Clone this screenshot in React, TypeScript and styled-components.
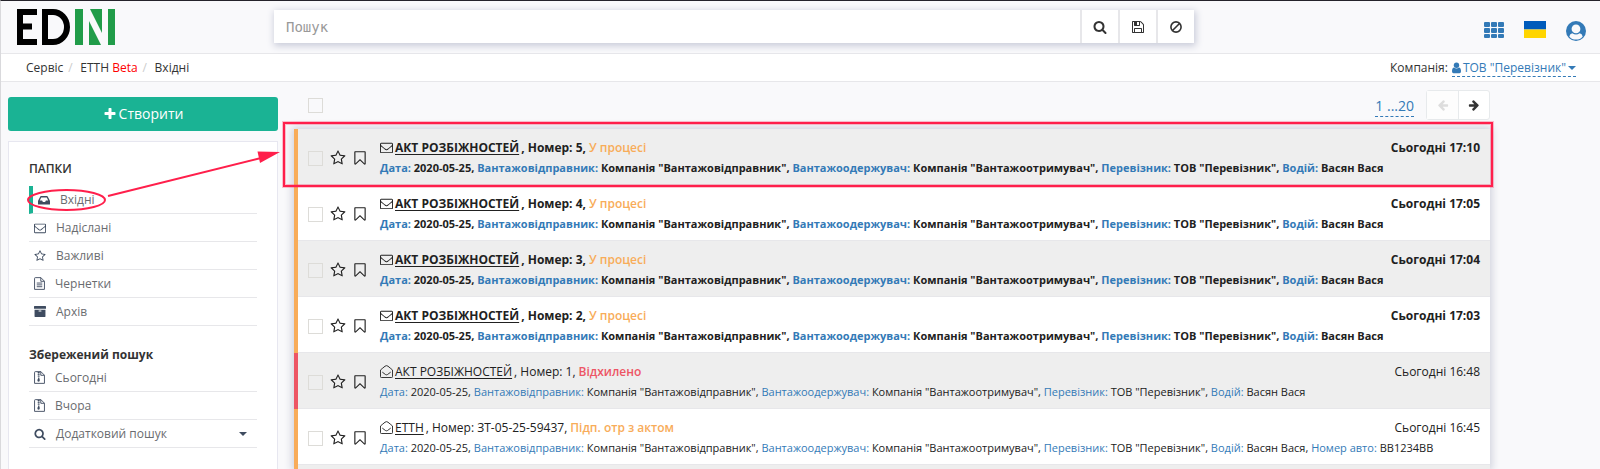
import React from "react";
import styled, { createGlobalStyle } from "styled-components";

const GlobalStyle = createGlobalStyle`
  * { box-sizing: border-box; }
  html, body { margin: 0; }
  body {
    background: #f9f9fb;
    color: #333;
    font: 12px/18px "Open Sans", "Noto Sans", sans-serif;
  }
  button, input { font: inherit; color: inherit; margin: 0; }
  a { color: inherit; text-decoration: none; }
  svg { display: block; flex: none; }
`;

/* ---------- icons ---------- */

const paths = {
  search:
    "M1216 832q0-185-131.5-316.5t-316.5-131.5-316.5 131.5-131.5 316.5 131.5 316.5 316.5 131.5 316.5-131.5 131.5-316.5zm512 832q0 52-38 90t-90 38q-54 0-90-38l-343-342q-179 124-399 124-143 0-273.5-55.5t-225-150-150-225-55.5-273.5 55.5-273.5 150-225 225-150 273.5-55.5 273.5 55.5 225 150 150 225 55.5 273.5q0 220-124 399l343 343q37 37 37 90z",
  star: "M1201 1004l306-297-422-62-189-382-189 382-422 62 306 297-73 421 378-199 377 199zm527-357q0 22-26 48l-363 354 86 500q1 7 1 20 0 50-41 50-19 0-40-12l-449-236-449 236q-22 12-40 12-21 0-31.5-14.5t-10.5-35.5q0-6 2-20l86-500-364-354q-25-27-25-48 0-37 56-46l502-73 225-455q19-41 49-41t49 41l225 455 502 73q56 9 56 46z",
  envelope:
    "M1664 1504v-768q-32 36-69 66-268 206-426 338-51 43-83 67t-86.5 48.5-102.5 24.5h-2q-48 0-102.5-24.5t-86.5-48.5-83-67q-158-132-426-338-37-30-69-66v768q0 13 9.5 22.5t22.5 9.5h1472q13 0 22.5-9.5t9.5-22.5zm0-1051v-24.5l-.5-13-3-12.5-5.5-9-9-7.5-14-2.5h-1472q-13 0-22.5 9.5t-9.5 22.5q0 168 147 284 193 152 401 317 6 5 35 29.5t46 37.5 44.5 31.5 50.5 27.5 43 9h2q20 0 43-9t50.5-27.5 44.5-31.5 46-37.5 35-29.5q208-165 401-317 54-43 100.5-115.5t46.5-131.5zm128-37v1088q0 66-47 113t-113 47h-1472q-66 0-113-47t-47-113v-1088q0-66 47-113t113-47h1472q66 0 113 47t47 113z",
  bookmark:
    "M1408 256h-1024v1242l423-406 89-85 89 85 423 406v-1242zm12-128q23 0 44 9 33 13 52.5 41t19.5 62v1289q0 34-19.5 62t-52.5 41q-19 8-44 8-48 0-83-32l-441-424-441 424q-36 33-83 33-23 0-44-9-33-13-52.5-41t-19.5-62v-1289q0-34 19.5-62t52.5-41q21-9 44-9h1048z",
  arrow:
    "M1600 960q0 54-37 91l-651 651q-39 37-91 37-51 0-90-37l-75-75q-38-38-38-91t38-91l293-293h-704q-52 0-84.5-37.5t-32.5-90.5v-128q0-53 32.5-90.5t84.5-37.5h704l-293-294q-38-36-38-90t38-90l75-75q38-38 90-38 53 0 91 38l651 651q37 35 37 90z",
  plus: "M1600 736v192q0 40-28 68t-68 28h-416v416q0 40-28 68t-68 28h-192q-40 0-68-28t-28-68v-416h-416q-40 0-68-28t-28-68v-192q0-40 28-68t68-28h416v-416q0-40 28-68t68-28h192q40 0 68 28t28 68v416h416q40 0 68 28t28 68z",
  floppy:
    "M512 1536h768v-384h-768v384zm896 0h128v-896q0-14-10-38.5t-20-34.5l-281-281q-10-10-34-20t-39-10v416q0 40-28 68t-68 28h-576q-40 0-68-28t-28-68v-416h-128v1280h128v-416q0-40 28-68t68-28h832q40 0 68 28t28 68v416zm-384-928v-320q0-13-9.5-22.5t-22.5-9.5h-192q-13 0-22.5 9.5t-9.5 22.5v320q0 13 9.5 22.5t22.5 9.5h192q13 0 22.5-9.5t9.5-22.5zm640 32v928q0 40-28 68t-68 28h-1344q-40 0-68-28t-28-68v-1344q0-40 28-68t68-28h928q40 0 88 20t76 48l280 280q28 28 48 76t20 88z",
};

type GlyphProps = { name: keyof typeof paths; size?: number; flip?: boolean };

const Glyph = ({ name, size = 14, flip }: GlyphProps) => (
  <svg width={size} height={size} viewBox="0 0 1792 1792" fill="currentColor" aria-hidden="true">
    <path d={paths[name]} transform={flip ? "translate(1792 0) scale(-1 1)" : undefined} />
  </svg>
);

const EnvelopeOpen = () => (
  <svg width="13" height="13" viewBox="0 0 14 14" fill="none" stroke="currentColor" aria-hidden="true">
    <path d="M.5 5.4V12.5q0 1 1 1h11q1 0 1-1V5.4Q11 3.300 8.600 1.300Q7 .1 5.400 1.300Q3 3.300 .5 5.400z" />
    <path d="M2.500 7.700Q4.500 9.200 6 10.300Q7 10.900 8 10.300Q9.500 9.200 11.500 7.700" />
  </svg>
);

const Inbox = () => (
  <svg width="12" height="14" viewBox="0 0 12 14" fill="currentColor" aria-hidden="true">
    <path
      fillRule="evenodd"
      d="M2.300 3.500Q2.500 3 3 3h6q.5 0 .7.5L11.800 7.500q.2.400.2.900V11q0 .5-.5.500h-11q-.5 0-.5-.5V8.400q0-.5.2-.9zM3.200 4.400L1.800 7.500h2.300l.8 1.500h2.200l.8-1.500h2.300L8.800 4.400z"
    />
  </svg>
);

const FileShape = () => (
  <path d="M1.500.6h6L11.400 4.500V13.400H.6V1.500Q.6.6 1.500.6zM7.400.6V4.600H11.400" fill="none" stroke="currentColor" />
);

const FileText = () => (
  <svg width="11" height="13" viewBox="0 0 12 14" aria-hidden="true">
    <FileShape />
    <path d="M3 6.500h6M3 8.500h6M3 10.500h6" stroke="currentColor" />
  </svg>
);

const FileZip = () => (
  <svg width="11" height="13" viewBox="0 0 12 14" aria-hidden="true">
    <FileShape />
    <path d="M4 1v1h1v1H4v1h1v1H4v1h1v1l-1.300 2.600Q3.500 11.500 5 11.500T6.300 9.600L5.600 7V6h.6V5h-.6V4h.6V3h-.6V2h.6V1z" fill="currentColor" />
  </svg>
);

const Archive = () => (
  <svg width="12" height="13" viewBox="0 0 13 14" fill="currentColor" aria-hidden="true">
    <path fillRule="evenodd" d="M.5 1h12q.5 0 .5.500V4H0V1.500Q0 1 .5 1zM.6 5h11.800V12.500q0 .5-.5.500H1.100q-.5 0-.5-.5zM5.300 6q-.5 0-.5.500T5.300 7h2.400q.5 0 .5-.5T7.700 6z" />
  </svg>
);

const Ban = () => (
  <svg width="12" height="12" viewBox="0 0 12 12" fill="none" stroke="currentColor" strokeWidth="1.600" aria-hidden="true">
    <circle cx="6" cy="6" r="5.100" />
    <path d="M2.500 9.500L9.500 2.500" />
  </svg>
);

const AppGrid = () => (
  <svg width="20" height="17" viewBox="0 0 20 17" fill="currentColor" aria-hidden="true">
    {[1, 7, 13].map((y) => [0, 7, 14].map((x) => <rect key={`${x}-${y}`} x={x} y={y} width="6" height={y === 13 ? 4 : 5} rx="1" />))}
  </svg>
);

const Flag = () => (
  <svg width="22" height="17" viewBox="0 0 22 17" role="img" aria-label="Українська">
    <path fill="#005bbb" d="M0 0h22v8.500H0z" />
    <path fill="#ffd500" d="M0 8.500h22V17H0z" />
  </svg>
);

const UserCircle = () => (
  <svg width="20" height="20" viewBox="0 0 20 20" aria-hidden="true">
    <circle cx="10" cy="10" r="10" fill="currentColor" />
    <circle cx="10" cy="7.900" r="4.400" fill="#f9f9fb" />
    <path d="M3.300 15.400Q3.900 12.400 6.300 12.200Q10 15 13.700 12.200Q16.100 12.400 16.700 15.400A8.600 8.600 0 0 1 3.300 15.400z" fill="#f9f9fb" />
  </svg>
);

const UserIcon = () => (
  <svg width="9" height="12" viewBox="0 0 9 12" fill="currentColor" aria-hidden="true">
    <circle cx="4.500" cy="3.200" r="2.700" />
    <path d="M2.200 5.400Q4.500 7.400 6.800 5.400Q9 5.600 9 9.300Q9 11.200 7.500 11.200H1.500Q0 11.200 0 9.300Q0 5.600 2.200 5.400z" />
  </svg>
);

const Caret = () => (
  <svg width="8" height="4" viewBox="0 0 8 4" fill="currentColor" aria-hidden="true">
    <path d="M0 0h8L4 4z" />
  </svg>
);

const Logo = () => (
  <svg width="98" height="36" viewBox="0 0 98 36" role="img" aria-label="EDIN">
    <path d="M0 0h20v6H6v8.500h9v6H6V30h14v6H0z" />
    <path fillRule="evenodd" d="M25 0H36a17 18 0 0 1 0 36H25zM31 6V30h5a11 12 0 0 0 0-24z" />
    <path fill="#219c49" d="M58 0h8v36h-8zM91 0h7v36h-7zM72 12L84 36H72zM73 0H85V24z" />
  </svg>
);

/* ---------- page frame ---------- */

const Page = styled.div`
  display: flex;
  flex-direction: column;
  min-height: 100vh;
  border-top: 1px solid #25232b;
  border-left: 1px solid #d9d9dc;
`;

const Header = styled.header`
  display: flex;
  align-items: flex-start;
  height: 53px;
  padding: 8px 14px 0 16px;
  border-bottom: 1px solid #e7e7ea;
`;

const LogoLink = styled.a`
  width: 257px;
`;

const SearchBar = styled.form`
  display: flex;
  flex: 1;
  height: 33px;
  margin-top: 1px;
  background: #fff;
  box-shadow: 1px 2px 7px 1px #c9cbd9;
`;

const SearchInput = styled.input`
  flex: 1;
  min-width: 0;
  padding: 0 12px;
  border: 0;
  background: transparent;
  font: 14px "DejaVu Sans Mono", monospace;
  &::placeholder { color: #999; opacity: 1; }
`;

const SearchButton = styled.button`
  display: grid;
  place-items: center;
  width: 38px;
  padding: 0;
  border: 0;
  border-left: 2px solid #e7e7ea;
  background: #fff;
`;

const Tools = styled.nav`
  display: flex;
  justify-content: flex-end;
  gap: 20px;
  width: 392px;
  padding-top: 12px;
  color: #337ab7;
`;

const Crumbs = styled.nav`
  display: flex;
  justify-content: space-between;
  height: 28px;
  padding: 5px 24px 0 25px;
  background: #fff;
  border-bottom: 1px solid #e7e7ea;
`;

const CrumbList = styled.div`
  display: flex;
`;

const Slash = styled.span`
  width: 17px;
  padding-left: 5px;
  color: #ccc;
`;

const Beta = styled.span`
  color: #f00;
`;

const Company = styled.div`
  display: flex;
  gap: 4px;
`;

const DashedLink = styled.a<{ $large?: boolean }>`
  display: flex;
  align-items: center;
  gap: 2px;
  height: ${(p) => (p.$large ? 22 : 18)}px;
  color: #337ab7;
  font-size: ${(p) => (p.$large ? 14 : 12)}px;
  border-bottom: 1px dashed #337ab7;
`;

const Columns = styled.div`
  display: flex;
  flex: 1;
  gap: 16px;
  padding: 0 110px 0 7px;
`;

/* ---------- sidebar ---------- */

const Sidebar = styled.aside`
  display: flex;
  flex: none;
  flex-direction: column;
  width: 270px;
  padding-top: 15px;
`;

const CreateButton = styled.button`
  display: flex;
  align-items: center;
  justify-content: center;
  gap: 2px;
  width: 100%;
  height: 34px;
  margin-bottom: 10px;
  border: 0;
  border-radius: 3px;
  background: #1ab394;
  color: #fff;
  font-size: 14px;
`;

const Panel = styled.section`
  flex: 1;
  padding: 18px 20px 0;
  background: #fff;
  border: 1px solid #e7e7f0;
  border-bottom: 0;
`;

const PanelTitle = styled.h2<{ $bold?: boolean }>`
  margin: 0;
  padding-bottom: ${(p) => (p.$bold ? 1 : 9)}px;
  font-size: 12px;
  line-height: 17px;
  font-weight: ${(p) => (p.$bold ? 700 : 600)};
`;

const FolderList = styled.ul`
  margin: 0;
  padding: 0 0 20px;
  list-style: none;
  &:last-child { padding-bottom: 0; }
`;

const Folder = styled.li<{ $active?: boolean }>`
  position: relative;
  height: 28px;
  padding-left: 5px;
  border-bottom: 1px solid #e7e7ea;
  border-left: ${(p) => (p.$active ? "4px solid #1ab394" : "0")};
`;

const FolderLink = styled.a`
  display: flex;
  align-items: center;
  gap: 10px;
  height: 27px;
  padding-right: 10px;
  color: #6a6c6f;
  svg { color: #3f4c60; }
  svg:last-child:not(:first-child) { margin-left: auto; }
`;

const Pointer = styled.svg`
  position: absolute;
  top: -50px;
  left: -8px;
  z-index: 3;
  pointer-events: none;
`;

/* ---------- document list ---------- */

const Main = styled.main`
  display: flex;
  flex: 1;
  flex-direction: column;
  min-width: 0;
`;

const ListBar = styled.div`
  display: flex;
  align-items: flex-start;
  justify-content: space-between;
  height: 47px;
  padding: 8px 0 0 14px;
`;

const Check = styled.input`
  appearance: none;
  flex: none;
  width: 15px;
  height: 15px;
  border: 1px solid #dddcd8;
  background: transparent;
`;

const BarCheck = styled(Check)`
  margin-top: 8px;
`;

const Pager = styled.div`
  display: flex;
  align-items: flex-start;
  gap: 12px;
`;

const PagerLink = styled(DashedLink)`
  margin-top: 5px;
`;

const PagerButtons = styled.div`
  display: flex;
  border: 1px solid #e7eaec;
  border-radius: 3px;
  background: #fff;
`;

const PagerButton = styled.button`
  display: grid;
  place-items: center;
  width: 31px;
  height: 28px;
  padding: 0;
  border: 0;
  background: none;
  & + & { border-left: 1px solid #e7eaec; }
  &:disabled { color: #ddd; background: #fdfdfd; }
`;

const List = styled.div`
  display: flex;
  flex: 1;
  flex-direction: column;
  background: #eee;
  box-shadow: 0 0 8px 2px #cfd1dc;
`;

const Row = styled.article<{ $tone: string; $unread: boolean }>`
  position: relative;
  display: flex;
  height: 56px;
  padding: 8px 10px 0;
  border-left: 4px solid ${(p) => p.$tone};
  background: #fff;
  box-shadow: inset 0 -1px #e7e7ea;
  color: #212121;
  font-weight: ${(p) => (p.$unread ? 700 : 400)};
  &:nth-child(odd) { background: #eee; }
`;

const NextRow = styled.div`
  flex: 1;
  border-left: 4px solid #f8ac59;
`;

const Marks = styled.div`
  display: flex;
  align-items: center;
  gap: 7px;
  width: 72px;
  height: 43px;
`;

const MarkButton = styled.button`
  margin-top: -1px;
  margin-right: -1px;
  padding: 0;
  border: 0;
  background: none;
`;

const Body = styled.div`
  flex: 1;
  min-width: 0;
`;

const TitleLine = styled.div`
  display: flex;
  align-items: center;
  height: 21px;
`;

const DocLink = styled.a`
  margin: 0 2px;
  text-decoration: underline;
  text-underline-offset: 2px;
`;

const Status = styled.span<{ $tone: string }>`
  margin-left: 3px;
  color: ${(p) => p.$tone};
  font-weight: 600;
`;

const Details = styled.p`
  margin: 0;
  font-size: 11px;
  line-height: 20px;
  white-space: nowrap;
`;

const Label = styled.span`
  color: #337ab7;
`;

const Time = styled.time`
  line-height: 21px;
`;

const Highlight = styled.div`
  position: absolute;
  inset: -7px -3px -2px -15px;
  z-index: 2;
  border: 2px solid #ff1f4b;
  box-shadow: 0 0 0 1px #ff1f4b44, inset 0 0 0 1px #ff1f4b44;
  pointer-events: none;
`;

/* ---------- data ---------- */

const ORANGE = "#f8ac59";
const RED = "#ed5565";

type Doc = { kind: string; number: string; status: string; tone: string; time: string; unread: boolean; car?: string };

const inWork = (n: number, time: string): Doc => ({
  kind: "АКТ РОЗБІЖНОСТЕЙ",
  number: String(n),
  status: "У процесі",
  tone: ORANGE,
  time,
  unread: true,
});

const docs: Doc[] = [
  inWork(5, "17:10"),
  inWork(4, "17:05"),
  inWork(3, "17:04"),
  inWork(2, "17:03"),
  { kind: "АКТ РОЗБІЖНОСТЕЙ", number: "1", status: "Відхилено", tone: RED, time: "16:48", unread: false },
  { kind: "ЕТТН", number: "ЗТ-05-25-59437", status: "Підп. отр з актом", tone: ORANGE, time: "16:45", unread: false, car: "ВВ1234ВВ" },
];

const DocRow = ({ doc, marked }: { doc: Doc; marked: boolean }) => (
  <Row $tone={doc.tone} $unread={doc.unread}>
    <Marks>
      <Check type="checkbox" aria-label="Вибрати документ" />
      <MarkButton aria-label="Важливе"><Glyph name="star" size={16} /></MarkButton>
      <MarkButton aria-label="Закладка"><Glyph name="bookmark" size={16} /></MarkButton>
    </Marks>
    <Body>
      <TitleLine>
        {doc.unread ? <Glyph name="envelope" size={13} /> : <EnvelopeOpen />}
        <DocLink href="#doc">{doc.kind}</DocLink>, Номер: {doc.number},
        <Status $tone={doc.tone}>{doc.status}</Status>
      </TitleLine>
      <Details>
        <Label>Дата:</Label> 2020-05-25, <Label>Вантажовідправник:</Label> Компанія "Вантажовідправник",{" "}
        <Label>Вантажоодержувач:</Label> Компанія "Вантажоотримувач", <Label>Перевізник:</Label> ТОВ "Перевізник",{" "}
        <Label>Водій:</Label> Васян Вася
        {doc.car && <>, <Label>Номер авто:</Label> {doc.car}</>}
      </Details>
    </Body>
    <Time>Сьогодні {doc.time}</Time>
    {marked && <Highlight />}
  </Row>
);

export default function App() {
  return (
    <Page>
      <GlobalStyle />
      <Header>
        <LogoLink href="#home"><Logo /></LogoLink>
        <SearchBar>
          <SearchInput type="text" placeholder="Пошук" aria-label="Пошук" />
          <SearchButton type="button" aria-label="Шукати"><Glyph name="search" /></SearchButton>
          <SearchButton type="button" aria-label="Зберегти"><Glyph name="floppy" /></SearchButton>
          <SearchButton type="button" aria-label="Скинути"><Ban /></SearchButton>
        </SearchBar>
        <Tools>
          <a href="#apps" aria-label="Сервіси"><AppGrid /></a>
          <a href="#lang"><Flag /></a>
          <a href="#user" aria-label="Профіль"><UserCircle /></a>
        </Tools>
      </Header>
      <Crumbs>
        <CrumbList>
          <a href="#service">Сервіс</a>
          <Slash>/</Slash>
          <a href="#ettn">ЕТТН <Beta>Beta</Beta></a>
          <Slash>/</Slash>
          <a href="#inbox">Вхідні</a>
        </CrumbList>
        <Company>
          Компанія:
          <DashedLink href="#company"><UserIcon /> ТОВ "Перевізник" <Caret /></DashedLink>
        </Company>
      </Crumbs>
      <Columns>
        <Sidebar>
          <CreateButton><Glyph name="plus" /> Створити</CreateButton>
          <Panel>
            <PanelTitle>ПАПКИ</PanelTitle>
            <FolderList>
              <Folder $active>
                <FolderLink href="#inbox"><Inbox />Вхідні</FolderLink>
                <Pointer width="262" height="80" viewBox="0 0 262 80" aria-hidden="true">
                  <g fill="none" stroke="#ff1f4b" strokeWidth="2">
                    <ellipse cx="41.500" cy="64" rx="38.500" ry="10" />
                    <path d="M83 60L236 22" />
                  </g>
                  <path d="M232.500 15.500L255 16L235 27z" fill="#ff1f4b" />
                </Pointer>
              </Folder>
              <Folder><FolderLink href="#sent"><Glyph name="envelope" size={12} />Надіслані</FolderLink></Folder>
              <Folder><FolderLink href="#starred"><Glyph name="star" size={12} />Важливі</FolderLink></Folder>
              <Folder><FolderLink href="#drafts"><FileText />Чернетки</FolderLink></Folder>
              <Folder><FolderLink href="#archive"><Archive />Архів</FolderLink></Folder>
            </FolderList>
            <PanelTitle $bold>Збережений пошук</PanelTitle>
            <FolderList>
              <Folder><FolderLink href="#today"><FileZip />Сьогодні</FolderLink></Folder>
              <Folder><FolderLink href="#yesterday"><FileZip />Вчора</FolderLink></Folder>
              <Folder><FolderLink href="#more"><Glyph name="search" size={12} />Додатковий пошук<Caret /></FolderLink></Folder>
            </FolderList>
          </Panel>
        </Sidebar>
        <Main>
          <ListBar>
            <BarCheck type="checkbox" aria-label="Вибрати всі" />
            <Pager>
              <PagerLink href="#pages" $large>1 ...20</PagerLink>
              <PagerButtons>
                <PagerButton disabled aria-label="Назад"><Glyph name="arrow" size={12} flip /></PagerButton>
                <PagerButton aria-label="Вперед"><Glyph name="arrow" size={12} /></PagerButton>
              </PagerButtons>
            </Pager>
          </ListBar>
          <List>
            {docs.map((doc, i) => <DocRow key={i} doc={doc} marked={i === 0} />)}
            <NextRow />
          </List>
        </Main>
      </Columns>
    </Page>
  );
}
